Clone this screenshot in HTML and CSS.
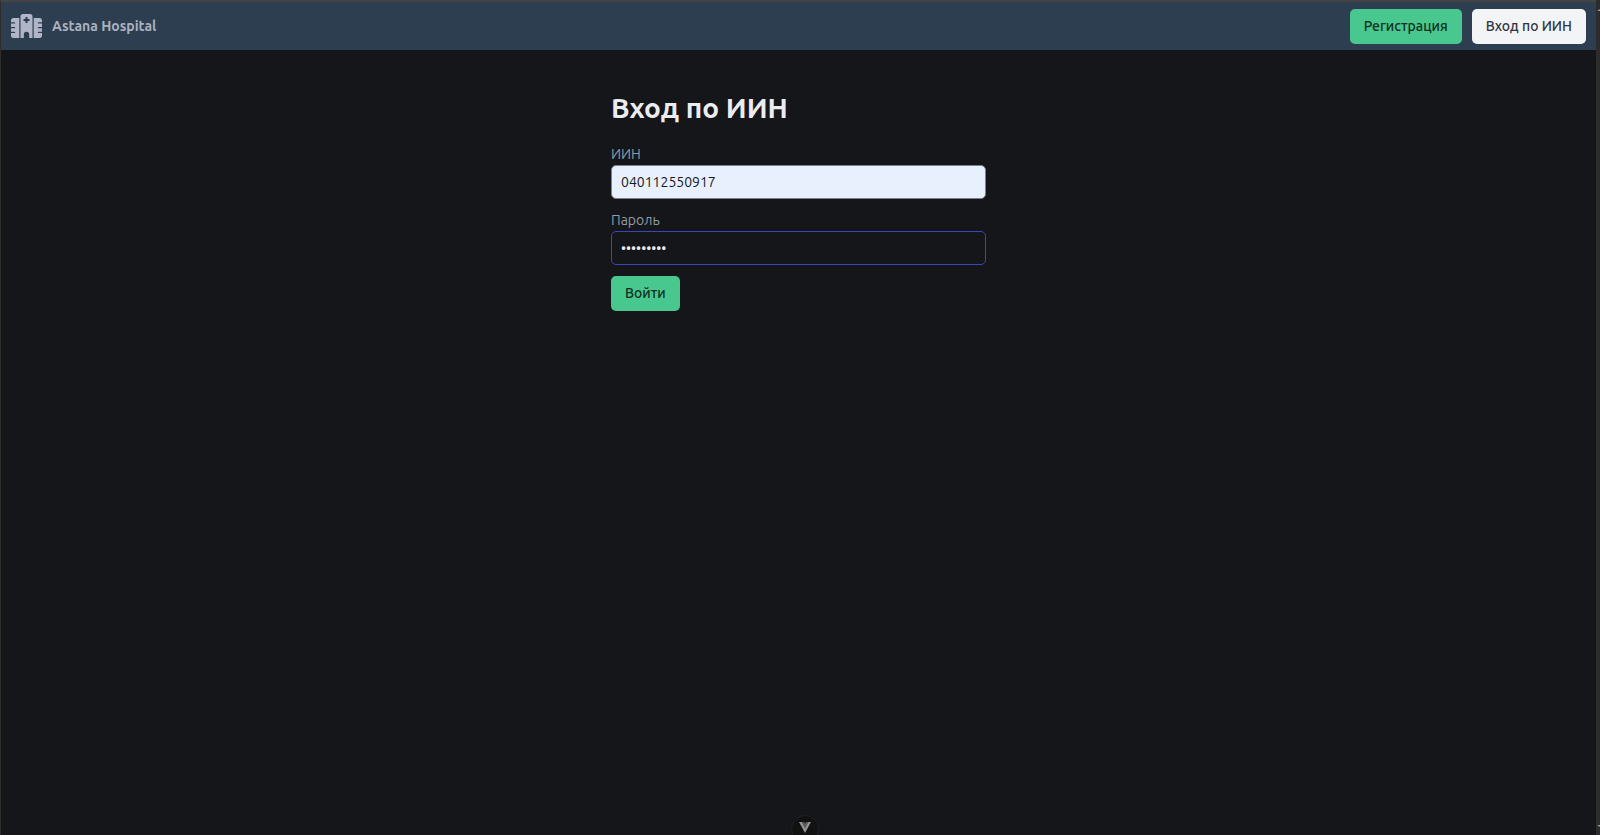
FILE: index.html
```html
<!DOCTYPE html>
<html lang="ru">
<head>
<meta charset="utf-8">
<title>Astana Hospital</title>
<link rel="stylesheet" href="styles.css">
</head>
<body>
<div class="page">
  <header class="navbar">
    <a class="brand" href="#">
      <svg class="brand-icon" viewBox="0 0 31 24" aria-hidden="true">
        <path fill="currentColor" fill-rule="evenodd" d="M12 0H19Q21.500 0 21.500 2.500V24H18.200V20.500A2.700 2.700 0 0 0 12.800 20.500V24H9.500V2.500Q9.500 0 12 0ZM14.500 3V5H12.500V7H14.500V9H16.500V7H18.500V5H16.500V3Z"/>
        <path fill="currentColor" d="M8.300 4V24H2.500Q0 24 0 21.500V19H3.500Q4.200 19 4.200 18.400T3.500 17.800H0V14.200H3.500Q4.200 14.200 4.200 13.600T3.500 13H0V9.500H3.500Q4.200 9.500 4.200 8.900T3.500 8.300H0V6.500Q0 4 2.500 4ZM22.700 4V24H28.500Q31 24 31 21.500V19H27.500Q26.800 19 26.800 18.400T27.500 17.800H31V14.200H27.500Q26.800 14.200 26.800 13.600T27.500 13H31V9.500H27.500Q26.800 9.500 26.800 8.900T27.500 8.300H31V6.500Q31 4 28.500 4Z"/>
      </svg>
      <span>Astana Hospital</span>
    </a>
    <nav class="actions">
      <a class="button button-primary" href="#">Регистрация</a>
      <a class="button button-light" href="#">Вход по ИИН</a>
    </nav>
  </header>
  <main class="content">
    <form class="login">
      <h1 class="title">Вход по ИИН</h1>
      <div class="field">
        <label class="label" for="iin">ИИН</label>
        <input class="input input-filled" id="iin" type="text" value="040112550917">
      </div>
      <div class="field">
        <label class="label" for="password">Пароль</label>
        <input class="input input-active" id="password" type="password" value="password1">
      </div>
      <button class="button button-primary" type="button">Войти</button>
    </form>
  </main>
</div>
<button class="devtools" type="button" aria-label="Vue DevTools">
  <svg class="devtools-icon" viewBox="0 0 12 11" aria-hidden="true">
    <path fill="#939393" d="M0 0H3L6 5.500L9 0H12L6 11Z"/>
    <path fill="#5c5c5c" d="M2.500 0H5L6 1.500L7 0H9.500L6 6.500Z"/>
  </svg>
</button>
<div class="scroll-track" aria-hidden="true">
  <svg class="scroll-arrow" viewBox="0 0 3 2"><path fill="#9a9a9a" d="M0 2L3 0V2Z"/></svg>
  <svg class="scroll-arrow" viewBox="0 0 3 2"><path fill="#9a9a9a" d="M0 0H3V2Z"/></svg>
</div>
</body>
</html>
```
FILE: styles.css
```css
* {
  box-sizing: border-box;
}

body {
  margin: 0;
  min-height: 100vh;
  display: flex;
  overflow: hidden;
  background: #14161a;
  color: #ebecf0;
  font: 14px/21px Ubuntu, "Noto Sans", sans-serif;
}

.page {
  flex: 1;
  border-top: 2px solid #444444;
  border-left: 1px solid #302c2a;
}

.scroll-track {
  display: flex;
  flex-direction: column;
  align-items: flex-end;
  justify-content: space-between;
  width: 4px;
  padding: 9px 0 8px;
  background: #2c2c2c;
}

.scroll-arrow {
  width: 3px;
  height: 2px;
}

.navbar {
  display: flex;
  align-items: center;
  justify-content: space-between;
  height: 48px;
  padding: 0 10px;
  background: #2c3e50;
}

.brand {
  display: flex;
  align-items: center;
  gap: 10px;
  color: #abb1bf;
  font-weight: 600;
  text-decoration: none;
}

.brand-icon {
  width: 31px;
  height: 24px;
  color: #b0b6c8;
}

.actions {
  display: flex;
  gap: 10px;
}

.button {
  display: inline-flex;
  align-items: center;
  justify-content: center;
  height: 35px;
  padding: 0 14px;
  border: 0;
  border-radius: 5px;
  font: inherit;
  font-weight: 500;
  text-decoration: none;
  cursor: pointer;
}

.button-primary {
  background: #48c78e;
  color: #0f2f21;
}

.button-light {
  background: #f3f4f6;
  color: #2e333d;
}

.content {
  padding: 42px 20px;
}

.login {
  max-width: 375px;
  margin: 0 auto;
}

.title {
  margin: 0 0 20px;
  font-size: 28px;
  line-height: 32px;
  font-weight: 700;
}

.field {
  margin-bottom: 11px;
}

.label {
  display: block;
  color: #959aa5;
}

.input {
  display: block;
  width: 100%;
  height: 34px;
  padding: 0 9px;
  border: 1px solid #7a8090;
  border-radius: 5px;
  outline: 0;
  background: #14161a;
  color: #ebecf0;
  font: inherit;
}

.input-filled {
  background: #e8f0fe;
  color: #16181c;
}

.input-active {
  border-color: #3548b5;
}

.devtools {
  position: fixed;
  bottom: -8px;
  left: 50%;
  width: 28px;
  height: 28px;
  margin-left: -9px;
  padding: 0 0 4px;
  border: 1px solid #202124;
  border-radius: 50%;
  background: #111111;
}

.devtools-icon {
  display: block;
  width: 12px;
  height: 11px;
  margin: 0 auto;
}
```
